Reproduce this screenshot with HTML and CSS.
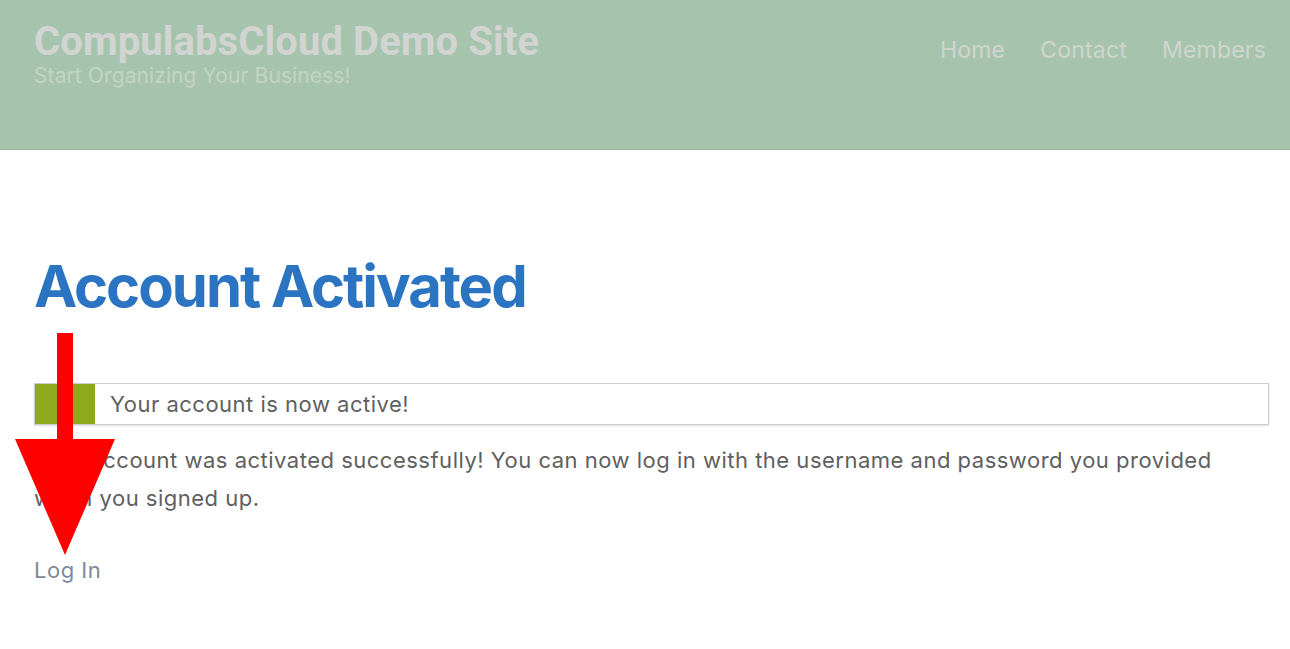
FILE: index.html
```html
<!DOCTYPE html>
<html lang="en">
<head>
  <meta charset="UTF-8" />
  <meta name="viewport" content="width=device-width, initial-scale=1.0"/>
  <title>Account Activated</title>
  <link rel="stylesheet" href="styles.css">
</head>
<body>

  <header class="site-header">
    <div class="branding">
      <div class="site-title">CompulabsCloud Demo Site</div>
      <div class="site-tagline">Start Organizing Your Business!</div>
    </div>
    <nav class="main-nav">
      <a href="#">Home</a>
      <a href="#">Contact</a>
      <a href="#">Members</a>
    </nav>
  </header>

  <main class="content">
    <h1 class="page-title">Account Activated</h1>

    <div class="notice">
      <span class="notice-icon"></span>
      <span class="notice-text">Your account is now active!</span>
    </div>

    <p class="message">Your account was activated successfully! You can now log in with the username and password you provided when you signed up.</p>

    <p class="login-link"><a href="#">Log In</a></p>

    <!-- annotation arrow over the page -->
    <svg class="arrow" width="100" height="222" viewBox="0 0 100 222">
      <rect x="42" y="0" width="16" height="108" fill="#ff0000"/>
      <polygon points="0,106 100,106 50,222" fill="#ff0000"/>
    </svg>
  </main>

</body>
</html>
```

FILE: styles.css
```css
body {
  margin: 0;
  font-family: Inter, "Open Sans", sans-serif;
  background-color: #fff;
  color: #5f5f5f;
}
.site-header {
  height: 149px;
  background-color: #a6c4ad;
  border-bottom: 1px solid #98b59f;
  display: flex;
  justify-content: space-between;
  align-items: flex-start;
  padding: 0 24px 0 34px;
}
.branding {
  padding-top: 18px;
}
.site-title {
  font-family: Roboto, sans-serif;
  font-size: 40px;
  font-weight: 700;
  letter-spacing: 0.1px;
  line-height: 47px;
  color: #d2d4d2;
}
.site-tagline {
  font-size: 21px;
  letter-spacing: 0.1px;
  line-height: 22px;
  color: #c2d3c4;
}
.main-nav {
  display: flex;
  gap: 35px;
  padding-top: 36px;
}
.main-nav a {
  font-size: 23px;
  letter-spacing: 0.2px;
  color: #d0d4cf;
  text-decoration: none;
}
.content {
  position: relative;
  padding: 92px 21px 0 34px;
}
.page-title {
  margin: 0 0 53px;
  font-size: 58px;
  font-weight: 700;
  letter-spacing: -2px;
  line-height: 88px;
  color: #2b74c1;
}
.notice {
  display: flex;
  align-items: center;
  height: 40px;
  border: 1px solid #cccccc;
  box-shadow: 0 1px 2px rgba(0, 0, 0, 0.12);
}
.notice-icon {
  width: 60px;
  align-self: stretch;
  background-color: #8ea91c;
}
.notice-text {
  padding-left: 15px;
  font-size: 22px;
  letter-spacing: 0.5px;
}
.message {
  margin: 16px 0 0;
  font-size: 22px;
  letter-spacing: 0.5px;
  line-height: 38px;
}
.login-link {
  margin: 40px 0 0;
  font-size: 22px;
  letter-spacing: 0.5px;
}
.login-link a {
  color: #7c8a99;
  text-decoration: none;
}
.arrow {
  position: absolute;
  left: 15px;
  top: 183px;
}
```
